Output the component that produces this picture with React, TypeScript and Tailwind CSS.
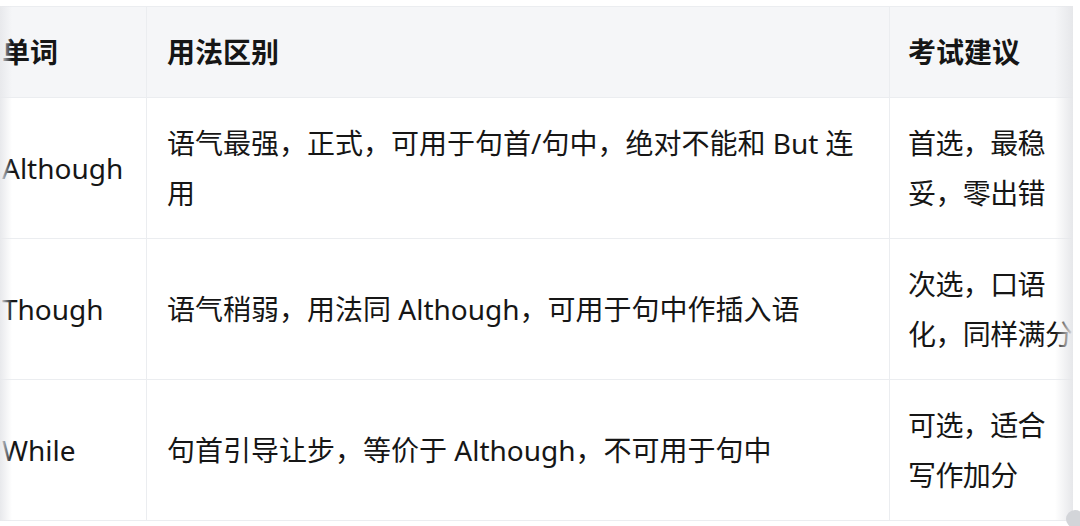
import React from "react";

const rows = [
  {
    word: "Although",
    usage: "语气最强，正式，可用于句首/句中，绝对不能和 But 连用",
    advice: ["首选，最稳", "妥，零出错"],
  },
  {
    word: "Though",
    usage: "语气稍弱，用法同 Although，可用于句中作插入语",
    advice: ["次选，口语", "化，同样满分"],
  },
  {
    word: "While",
    usage: "句首引导让步，等价于 Although，不可用于句中",
    advice: ["可选，适合", "写作加分"],
  },
];

export default function App() {
  return (
    <div
      className="relative w-[1080px] h-[526px] bg-white overflow-hidden text-[#161616]"
      style={{ fontFamily: '"Noto Sans", "Noto Sans CJK SC", sans-serif' }}
    >
      <div className="pt-[6px]">
        <div className="relative w-[1073px] overflow-hidden">
          <table className="-ml-[22px] border-collapse table-fixed w-[1140px] text-[28px] leading-[50px]">
            <colgroup>
              <col className="w-[168px]" />
              <col className="w-[743px]" />
              <col className="w-[229px]" />
            </colgroup>
            <thead>
              <tr className="bg-[#f5f6f8]">
                <th className="border border-[#ebedf0] pl-[23px] pr-[20px] py-[20px] text-left font-bold">单词</th>
                <th className="border border-[#ebedf0] px-[20px] py-[20px] text-left font-bold">用法区别</th>
                <th className="border border-[#ebedf0] pl-[18px] pr-[20px] py-[20px] text-left font-bold">考试建议</th>
              </tr>
            </thead>
            <tbody>
              {rows.map((r) => (
                <tr key={r.word} className="h-[141px]">
                  <td className="border border-[#ebedf0] pl-[23px] pr-[20px] py-[20px] align-middle">{r.word}</td>
                  <td className="border border-[#ebedf0] px-[20px] py-[20px] align-middle">{r.usage}</td>
                  <td className="border border-[#ebedf0] pl-[18px] pr-[20px] py-[20px] align-middle whitespace-nowrap tracking-[-0.6px]">
                    {r.advice.map((l) => (
                      <div key={l}>{l}</div>
                    ))}
                  </td>
                </tr>
              ))}
            </tbody>
          </table>
          <div className="pointer-events-none absolute left-0 top-0 bottom-0 w-[12px] bg-gradient-to-r from-[#e8e9ec] to-transparent" />
          <div className="pointer-events-none absolute right-0 top-0 bottom-0 w-[18px] bg-gradient-to-l from-[#e6e7ea] to-transparent" />
        </div>
      </div>
      <div className="absolute left-[1066px] top-[510px] w-[18px] h-[18px] rounded-full bg-[#d3d5d9]" />
    </div>
  );
}
